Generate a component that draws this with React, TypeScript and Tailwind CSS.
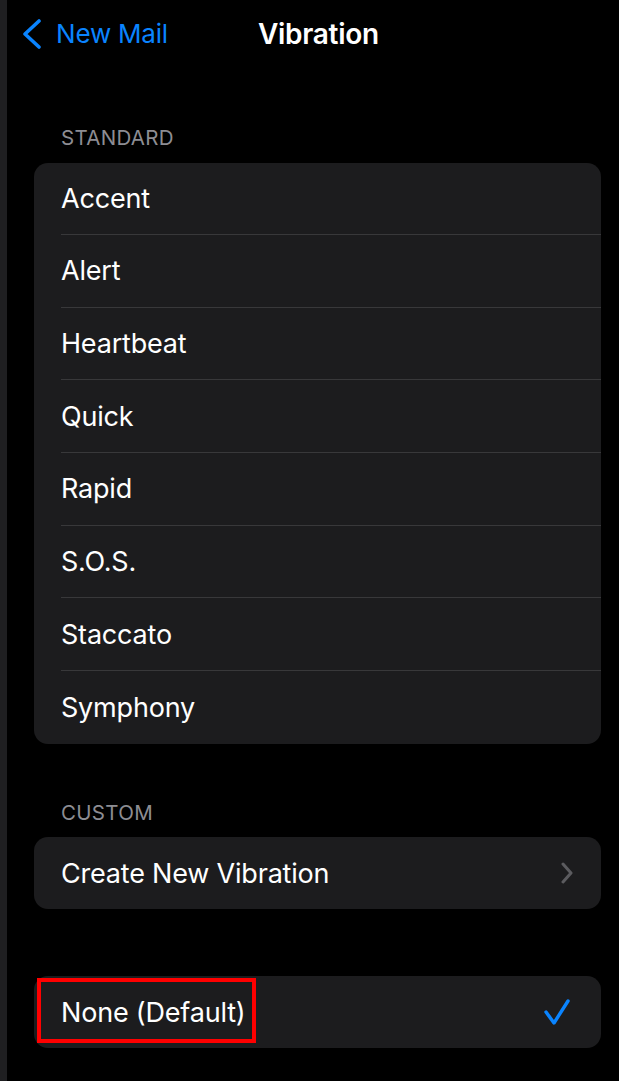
import React from "react";

const standard = ["Accent", "Alert", "Heartbeat", "Quick", "Rapid", "S.O.S.", "Staccato", "Symphony"];

function Row({ label, last }: { label: string; last?: boolean }) {
  return (
    <div className="h-[72.625px] pl-[27px] flex">
      <div className={`flex-1 flex items-center ${last ? "" : "border-b border-[#38383a]"}`}>
        <span className="text-[27px] leading-none text-white tracking-[-0.2px]">{label}</span>
      </div>
    </div>
  );
}

export default function App() {
  return (
    <div className="flex w-[619px] h-[1081px] overflow-hidden bg-black" style={{ fontFamily: "Inter, 'Noto Sans', sans-serif" }}>
      <div className="w-[7px] shrink-0 bg-[#1f1f21]" />
      <div className="flex-1 flex flex-col">
        {/* nav */}
        <div className="h-[68px] flex items-center">
          <div className="ml-[15px] flex items-center text-[#0a84ff]">
            <svg width="20" height="30" viewBox="0 0 20 30" className="shrink-0">
              <polyline points="17,2 3,15 17,28" fill="none" stroke="#0a84ff" strokeWidth="3.6" strokeLinecap="round" strokeLinejoin="round" />
            </svg>
            <span className="ml-[14px] text-[26px] leading-none tracking-[-0.2px]">New Mail</span>
          </div>
          <span className="ml-[90px] text-[28px] leading-none font-semibold text-white tracking-[-0.3px]">Vibration</span>
        </div>

        <div className="ml-[27px] mr-[18px] flex flex-col">
          <div className="mt-[60px] pl-[27px] text-[20.5px] leading-none text-[#8d8d93] tracking-[0.3px]">STANDARD</div>
          <div className="mt-[14px] rounded-[14px] bg-[#1c1c1e] overflow-hidden">
            {standard.map((s, i) => (
              <Row key={s} label={s} last={i === standard.length - 1} />
            ))}
          </div>

          <div className="mt-[59px] pl-[27px] text-[20.5px] leading-none text-[#8d8d93] tracking-[0.3px]">CUSTOM</div>
          <div className="mt-[14px] rounded-[14px] bg-[#1c1c1e] h-[72px] pl-[27px] pr-[27px] flex items-center justify-between">
            <span className="text-[27px] leading-none text-white tracking-[-0.2px]">Create New Vibration</span>
            <svg width="14" height="22" viewBox="0 0 14 22">
              <polyline points="3,2 11,11 3,20" fill="none" stroke="#5b5b5f" strokeWidth="3" strokeLinecap="round" strokeLinejoin="round" />
            </svg>
          </div>

          <div className="mt-[67px] rounded-[14px] bg-[#1c1c1e] h-[72px] pl-[27px] pr-[30px] flex items-center justify-between relative">
            <span className="text-[27px] leading-none text-white tracking-[-0.2px]">None (Default)</span>
            <svg width="28" height="28" viewBox="0 0 28 28">
              <polyline points="3,14 11,25 25,3" fill="none" stroke="#0a84ff" strokeWidth="3.4" strokeLinecap="round" strokeLinejoin="round" />
            </svg>
            <div className="absolute left-[3px] top-[2px] w-[219px] h-[65px] border-[4px] border-[#ff0000]" />
          </div>
        </div>
      </div>
    </div>
  );
}
